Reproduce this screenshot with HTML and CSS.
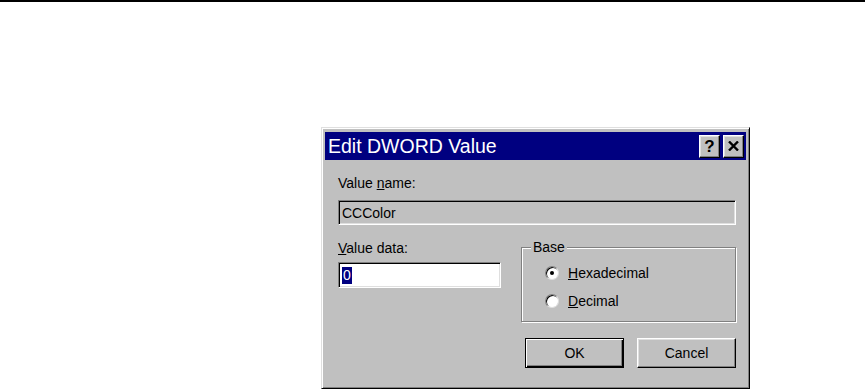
FILE: index.html
```html
<!DOCTYPE html>
<html>
<head>
<meta charset="utf-8">
<link rel="stylesheet" href="styles.css">
</head>
<body>
<div class="rule"></div>
<div class="stage">
  <div class="dialog">
    <div class="titlebar">
      <span class="title">Edit DWORD Value</span>
      <div class="caption-buttons">
        <span class="cap-btn help">?</span>
        <span class="cap-btn close">
          <svg width="11" height="10" viewBox="0 0 11 10"><path d="M1 0.5 L10 9.5 M10 0.5 L1 9.5" stroke="#000" stroke-width="2.4" fill="none"/></svg>
        </span>
      </div>
    </div>
    <div class="content">
      <div class="label first">Value <u>n</u>ame:</div>
      <div class="field readonly">CCColor</div>
      <div class="middle">
        <div class="data-col">
          <div class="label"><u>V</u>alue data:</div>
          <div class="field data"><span class="sel">0</span></div>
        </div>
        <fieldset class="group">
          <legend>Base</legend>
          <div class="radio-row"><span class="radio checked"></span><span><u>H</u>exadecimal</span></div>
          <div class="radio-row"><span class="radio"></span><span><u>D</u>ecimal</span></div>
        </fieldset>
      </div>
      <div class="buttons">
        <div class="btn default"><span>OK</span></div>
        <div class="btn"><span>Cancel</span></div>
      </div>
    </div>
  </div>
</div>
</body>
</html>
```
FILE: styles.css
```css
html, body {
  margin: 0;
  padding: 0;
  background: #fff;
  font-family: "Liberation Sans", Arial, sans-serif;
  overflow: hidden;
}
.rule {
  height: 2px;
  background: #000;
}
.stage {
  padding: 125px 0 0 321px;
}
.dialog {
  box-sizing: border-box;
  width: 429px;
  height: 262px;
  background: #c0c0c0;
  border-top: 1px solid #dfdfdf;
  border-left: 1px solid #dfdfdf;
  border-right: 1px solid #000;
  border-bottom: 1px solid #000;
  box-shadow: inset 1px 1px 0 #fff, inset -1px -1px 0 #808080;
  padding: 4px 3px 3px 3px;
  display: flex;
  flex-direction: column;
}
.titlebar {
  height: 28px;
  background: #000080;
  display: flex;
  align-items: center;
  justify-content: space-between;
  padding: 0 2px 0 3px;
}
.title {
  color: #fff;
  font-size: 19.5px;
  line-height: 28px;
}
.caption-buttons {
  display: flex;
  gap: 3px;
}
.cap-btn {
  box-sizing: border-box;
  width: 21px;
  height: 23px;
  background: #c0c0c0;
  border-top: 1px solid #fff;
  border-left: 1px solid #fff;
  border-right: 1px solid #000;
  border-bottom: 1px solid #000;
  box-shadow: inset -1px -1px 0 #808080, inset 1px 1px 0 #dfdfdf;
  display: flex;
  align-items: center;
  justify-content: center;
  color: #000;
}
.help {
  font-size: 17px;
  font-weight: bold;
  line-height: 1;
}
.content {
  flex: 1;
  padding: 14px 10px 0 13px;
  font-size: 14px;
  color: #000;
}
.label {
  line-height: 18px;
  height: 18px;
}
.field {
  box-sizing: border-box;
  height: 25px;
  margin-top: 8px;
  border-top: 1px solid #808080;
  border-left: 1px solid #808080;
  border-right: 1px solid #fff;
  border-bottom: 1px solid #fff;
  box-shadow: inset 1px 1px 0 #000, inset -1px -1px 0 #dfdfdf;
  padding: 2px 0 0 3px;
  line-height: 20px;
}
.readonly {
  background: #c0c0c0;
}
.middle {
  display: flex;
  justify-content: space-between;
}
.data-col {
  padding-top: 14px;
}
.data {
  width: 163px;
  height: 26px;
  margin-top: 5px;
  background: #fff;
}
.sel {
  display: inline-block;
  background: #000080;
  color: #fff;
  padding: 0 1px;
  line-height: 17px;
  margin-top: 1px;
}
.group {
  box-sizing: border-box;
  width: 215px;
  height: 84px;
  margin: 13px 0 0 0;
  padding: 3px 0 0 23px;
  border: 1px solid #808080;
  box-shadow: inset 1px 1px 0 #fff, 1px 1px 0 #fff;
  min-width: 0;
}
.group legend {
  padding: 0 2px;
  margin-left: -14px;
  line-height: 18px;
  background: #c0c0c0;
}
.radio-row {
  display: flex;
  align-items: center;
  height: 28px;
  gap: 9px;
}
.radio {
  box-sizing: border-box;
  width: 14px;
  height: 14px;
  border-radius: 50%;
  background: #fff;
  border-top: 1px solid #808080;
  border-left: 1px solid #808080;
  border-right: 1px solid #dfdfdf;
  border-bottom: 1px solid #dfdfdf;
  box-shadow: inset 1px 1px 0 #000;
  position: relative;
}
.radio.checked::after {
  content: "";
  position: absolute;
  left: 4px;
  top: 4px;
  width: 4px;
  height: 4px;
  border-radius: 50%;
  background: #000;
}
.buttons {
  display: flex;
  justify-content: flex-end;
  gap: 13px;
  margin-top: 16px;
}
.btn {
  box-sizing: border-box;
  width: 99px;
  height: 30px;
  background: #c0c0c0;
  border-top: 1px solid #fff;
  border-left: 1px solid #fff;
  border-right: 1px solid #000;
  border-bottom: 1px solid #000;
  box-shadow: inset -1px -1px 0 #808080, inset 1px 1px 0 #dfdfdf;
  display: flex;
  align-items: center;
  justify-content: center;
  line-height: 18px;
}
.btn.default {
  border: 1px solid #000;
  box-shadow: inset 1px 1px 0 #fff, inset -1px -1px 0 #000, inset -2px -2px 0 #808080;
}
```
